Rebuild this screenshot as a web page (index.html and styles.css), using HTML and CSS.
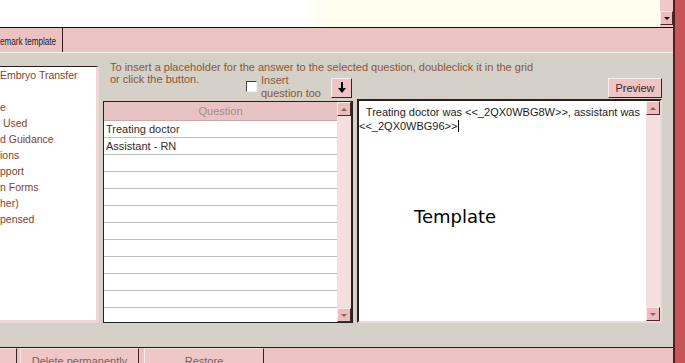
FILE: index.html
```html
<!DOCTYPE html>
<html lang="en">
<head>
	<meta charset="UTF-8">
	<title>Remark template</title>
	<link rel="stylesheet" href="styles.css">
</head>
<body>
	<div class="app">
		<div class="top">
			<div class="paper"></div>
			<div class="vscroll topscroll">
				<span class="sbtn down"></span>
			</div>
		</div>
		<div class="tabs">
			<div class="tab"><span>emark template</span></div>
		</div>
		<div class="panel">
			<ul class="list">
				<li>Embryo Transfer</li>
				<li></li>
				<li>e</li>
				<li> Used</li>
				<li>d Guidance</li>
				<li>ions</li>
				<li>pport</li>
				<li>n Forms</li>
				<li>her)</li>
				<li>pensed</li>
			</ul>
			<div class="work">
				<div class="head">
					<p class="hint">To insert a placeholder for the answer to the selected question, doubleclick it in the grid</p>
					<div class="tools">
						<span class="hint short">or click the button.</span>
						<span class="check"></span>
						<span class="insert">Insert<br>question too</span>
						<button class="arrowbtn">
							<svg width="10" height="12" viewBox="0 0 10 12"><path d="M4 0h2v6h3l-4 5-4-5h3z" fill="#000"/></svg>
						</button>
						<button class="preview">Preview</button>
					</div>
				</div>
				<div class="boxes">
					<div class="grid">
						<div class="cols">
							<div class="ghead">Question</div>
							<div class="row">Treating doctor</div>
							<div class="row">Assistant - RN</div>
							<div class="row"></div>
							<div class="row"></div>
							<div class="row"></div>
							<div class="row"></div>
							<div class="row"></div>
							<div class="row"></div>
							<div class="row"></div>
							<div class="row"></div>
							<div class="row"></div>
							<div class="row"></div>
						</div>
						<div class="vscroll">
							<span class="sbtn up"></span>
							<span class="sbtn down"></span>
						</div>
					</div>
					<div class="tpl">
						<div class="tpltext"> Treating doctor was &lt;&lt;_2QX0WBG8W&gt;&gt;, assistant was
&lt;&lt;_2QX0WBG96&gt;&gt;<span class="caret"></span></div>
						<div class="vscroll">
							<span class="sbtn up"></span>
							<span class="sbtn down"></span>
						</div>
						<div class="tpllabel">Template</div>
					</div>
				</div>
			</div>
		</div>
		<div class="foot">
			<button class="fbtn stub"></button>
			<button class="fbtn del">Delete permanently</button>
			<button class="fbtn restore">Restore</button>
		</div>
	</div>
	<div class="edge"></div>
</body>
</html>
```

FILE: styles.css
```css
	*{
		margin: 0;
		padding: 0;
		box-sizing: border-box;
		list-style-type: none;
	}
	body{
		width: 685px;
		height: 363px;
		overflow: hidden;
		display: flex;
		font: 11px 'Liberation Sans', Arial, sans-serif;
		background-color: #ecc2c2;
	}
	.app{
		width: 675px;
		height: 363px;
		display: flex;
		flex-direction: column;
		border-right: 2px solid #4d2020;
	}
	.edge{
		flex: 1;
		background-color: #c65458;
	}

	/* top record area */
	.top{
		height: 28px;
		display: flex;
		border-bottom: 1px solid #111;
	}
	.paper{
		flex: 1;
		background: linear-gradient(to right, #fff 0, #fff 300px, #fefdee 330px, #fefdee 100%);
	}
	.vscroll{
		width: 14px;
		display: flex;
		flex-direction: column;
		justify-content: space-between;
		background-color: #f4dede;
	}
	.topscroll{
		width: 13px;
		justify-content: flex-end;
		background-color: #f0c8c8;
	}
	.sbtn{
		height: 14px;
		display: flex;
		align-items: center;
		justify-content: center;
		background-color: #ebbdbd;
		border-top: 1px solid #fbecec;
		border-left: 1px solid #fbecec;
		border-right: 1px solid #4a2a2a;
		border-bottom: 1px solid #4a2a2a;
	}
	.sbtn::after{
		content: '';
		border-left: 3px solid transparent;
		border-right: 3px solid transparent;
	}
	.sbtn.down::after{
		border-top: 3px solid #8a6060;
	}
	.sbtn.up::after{
		border-bottom: 3px solid #8a6060;
	}
	.topscroll .sbtn{
		height: 14px;
		margin-bottom: 2px;
	}
	.topscroll .sbtn.down::after{
		border-top-color: #111;
	}

	/* tab strip */
	.tabs{
		height: 24px;
		display: flex;
		background-color: #ebc3c3;
	}
	.tab{
		width: 63px;
		line-height: 24px;
		padding-top: 1px;
		color: #222;
		white-space: nowrap;
		overflow: hidden;
		border-right: 1px solid #3b1c1c;
	}
	.tab span{
		display: inline-block;
		transform: scaleX(0.74);
		transform-origin: left center;
	}

	/* grey panel */
	.panel{
		height: 296px;
		display: flex;
		background-color: #d5d1c9;
		border-top: 1px solid #f4f0ea;
		border-bottom: 1px solid #3a1414;
	}
	.list{
		width: 99px;
		height: 257px;
		margin-top: 13px;
		background-color: #fff;
		border-top: 1px solid #2a1a1a;
		border-right: 3px solid #efd6d6;
		border-bottom: 3px solid #efd6d6;
		overflow: hidden;
	}
	.list li{
		height: 16px;
		line-height: 16px;
		font-size: 10.5px;
		color: #84412e;
		white-space: pre;
	}
	.work{
		width: 559px;
		margin-left: 4px;
		display: flex;
		flex-direction: column;
	}
	.head{
		height: 47px;
		padding-top: 8px;
	}
	.hint{
		padding-left: 7px;
		line-height: 12px;
		color: #8a5638;
		white-space: nowrap;
	}
	.tools{
		display: flex;
		align-items: flex-start;
	}
	.hint.short{
		width: 143px;
	}
	.check{
		width: 11px;
		height: 11px;
		margin-top: 8px;
		background-color: #fff;
		border-top: 1px solid #404040;
		border-left: 1px solid #404040;
		border-right: 1px solid #f4f0ea;
		border-bottom: 1px solid #f4f0ea;
	}
	.insert{
		width: 70px;
		margin: 1px 0 0 4px;
		line-height: 13px;
		color: #8a5638;
	}
	.arrowbtn, .preview{
		height: 20px;
		margin-top: 5px;
		background-color: #eec4c4;
		border-top: 1px solid #fbeeee;
		border-left: 1px solid #fbeeee;
		border-right: 1px solid #3a2020;
		border-bottom: 1px solid #3a2020;
		font: inherit;
		color: #3a2a2a;
		display: flex;
		align-items: center;
		justify-content: center;
	}
	.arrowbtn{
		width: 21px;
	}
	.preview{
		width: 54px;
		margin-left: auto;
	}

	/* question grid and template box */
	.boxes{
		display: flex;
		align-items: flex-start;
		gap: 4px;
	}
	.grid{
		width: 250px;
		height: 222px;
		margin-top: 1px;
		display: flex;
		border-top: 1px solid #222;
		border-left: 1px solid #222;
		border-bottom: 1px solid #222;
		border-right: 2px solid #2e2020;
		background-color: #fff;
	}
	.cols{
		flex: 1;
		overflow: hidden;
	}
	.ghead{
		height: 19px;
		line-height: 18px;
		text-align: center;
		color: #a48c8c;
		background-color: #e9c3c3;
		border-bottom: 1px solid #c9a9a9;
	}
	.row{
		height: 17px;
		line-height: 16px;
		padding-left: 2px;
		color: #3a2a2a;
		border-bottom: 1px solid #bdbdbd;
	}
	.tpl{
		position: relative;
		width: 305px;
		height: 224px;
		margin-top: -1px;
		display: flex;
		background-color: #fff;
		border-top: 2px solid #2b1b1b;
		border-left: 2px solid #2b1b1b;
		border-right: 2px solid #efd6d6;
		border-bottom: 2px solid #efd6d6;
	}
	.tpltext{
		flex: 1;
		padding: 4px 0 0 0;
		line-height: 14px;
		text-indent: 4px;
		color: #1e1e1e;
		white-space: pre;
	}
	.caret{
		display: inline-block;
		width: 1px;
		height: 12px;
		margin-left: 1px;
		vertical-align: -2px;
		background-color: #000;
	}
	.tpllabel{
		position: absolute;
		left: 55px;
		top: 106px;
		font: 18px 'DejaVu Sans', sans-serif;
		line-height: 20px;
		color: #000;
	}

	/* bottom buttons */
	.foot{
		flex: 1;
		display: flex;
		background-color: #ecc2c2;
		overflow: hidden;
	}
	.fbtn{
		height: 22px;
		padding-top: 4px;
		font: inherit;
		color: #7a6060;
		background-color: #efc7c7;
		border-top: 1px solid #f6dede;
		border-left: 1px solid #fbeaea;
		border-right: 1px solid #3a2020;
		border-bottom: 1px solid #3a2020;
	}
	.stub{
		width: 17px;
		border-left: none;
	}
	.del{
		width: 119px;
		margin-left: 3px;
	}
	.restore{
		width: 120px;
		margin-left: 5px;
	}
```
